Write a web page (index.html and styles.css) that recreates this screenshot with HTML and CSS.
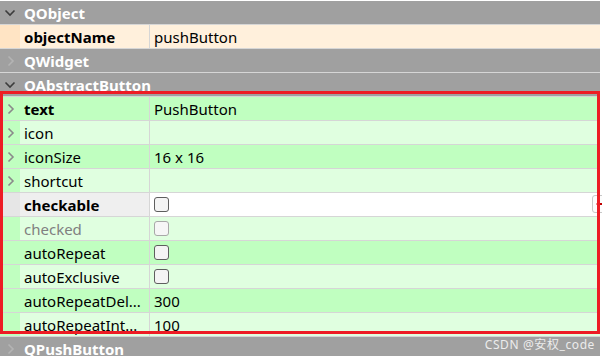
FILE: index.html
```html
<!DOCTYPE html>
<html>
<head>
<meta charset="utf-8">
<link rel="stylesheet" href="styles.css">
</head>
<body>
<div class="page">
  <div class="sheet">
    <div class="group">
      <span class="ind"><svg class="chev-down" width="12" height="8" viewBox="0 0 12 8"><polyline points="1.5,1.5 6,6 10.5,1.5"/></svg></span>
      <span class="gname">QObject</span>
    </div>
    <div class="prop obj">
      <span class="ind"></span>
      <span class="name bold">objectName</span>
      <span class="val">pushButton</span>
    </div>
    <div class="group">
      <span class="ind"><svg class="chev-right faint" width="8" height="12" viewBox="0 0 8 12"><polyline points="1.5,1.5 6,6 1.5,10.5"/></svg></span>
      <span class="gname">QWidget</span>
    </div>
    <div class="group">
      <span class="ind"><svg class="chev-down" width="12" height="8" viewBox="0 0 12 8"><polyline points="1.5,1.5 6,6 10.5,1.5"/></svg></span>
      <span class="gname">QAbstractButton</span>
    </div>

    <div class="prop dark">
      <span class="ind"><svg class="chev-right" width="8" height="12" viewBox="0 0 8 12"><polyline points="1.5,1.5 6,6 1.5,10.5"/></svg></span>
      <span class="name bold">text</span>
      <span class="val">PushButton</span>
    </div>
    <div class="prop light">
      <span class="ind"><svg class="chev-right" width="8" height="12" viewBox="0 0 8 12"><polyline points="1.5,1.5 6,6 1.5,10.5"/></svg></span>
      <span class="name">icon</span>
      <span class="val"></span>
    </div>
    <div class="prop dark">
      <span class="ind"><svg class="chev-right" width="8" height="12" viewBox="0 0 8 12"><polyline points="1.5,1.5 6,6 1.5,10.5"/></svg></span>
      <span class="name">iconSize</span>
      <span class="val">16 x 16</span>
    </div>
    <div class="prop light">
      <span class="ind"><svg class="chev-right" width="8" height="12" viewBox="0 0 8 12"><polyline points="1.5,1.5 6,6 1.5,10.5"/></svg></span>
      <span class="name">shortcut</span>
      <span class="val"></span>
    </div>
    <div class="prop current">
      <span class="ind"></span>
      <span class="name bold">checkable</span>
      <span class="val"><span class="box"></span><span class="reset"><svg width="8" height="8" viewBox="0 0 8 8"><path d="M1 4 L4 1.5 L4 3 L7 3 L7 5 L4 5 L4 6.5 Z"/></svg></span></span>
    </div>
    <div class="prop light">
      <span class="ind"></span>
      <span class="name dim">checked</span>
      <span class="val"><span class="box disabled"></span></span>
    </div>
    <div class="prop dark">
      <span class="ind"></span>
      <span class="name">autoRepeat</span>
      <span class="val"><span class="box"></span></span>
    </div>
    <div class="prop light">
      <span class="ind"></span>
      <span class="name">autoExclusive</span>
      <span class="val"><span class="box"></span></span>
    </div>
    <div class="prop dark">
      <span class="ind"></span>
      <span class="name">autoRepeatDel...</span>
      <span class="val">300</span>
    </div>
    <div class="prop light">
      <span class="ind"></span>
      <span class="name">autoRepeatInt...</span>
      <span class="val">100</span>
    </div>
    <div class="group">
      <span class="ind"><svg class="chev-right faint" width="8" height="12" viewBox="0 0 8 12"><polyline points="1.5,1.5 6,6 1.5,10.5"/></svg></span>
      <span class="gname">QPushButton</span>
    </div>
  </div>
  <div class="highlight"></div>
  <div class="watermark">CSDN @安权_code</div>
</div>
</body>
</html>
```

FILE: styles.css
```css
html, body {
  margin: 0;
  padding: 0;
  background: #ffffff;
}
.page {
  position: relative;
  width: 602px;
  height: 356px;
  overflow: hidden;
  padding-top: 1px;
  box-sizing: border-box;
  font-family: "Noto Sans", "Noto Sans CJK SC", sans-serif;
  font-size: 15px;
  color: #000000;
}
.sheet {
  width: 600px;
  display: flex;
  flex-direction: column;
}
.group, .prop {
  height: 23px;
  border-bottom: 1px solid #d6d6d6;
  display: flex;
  align-items: center;
}
.group {
  background: #a0a0a0;
}
.ind {
  width: 20px;
  height: 100%;
  flex: none;
  display: flex;
  align-items: center;
  justify-content: center;
}
.gname {
  padding-left: 4px;
  color: #ffffff;
  font-weight: bold;
  padding-top: 1px;
}
.chev-down polyline, .chev-right polyline {
  fill: none;
  stroke: #3c3c3c;
  stroke-width: 1.6;
}
.chev-right polyline {
  stroke: #8a8a8a;
}
.chev-right.faint polyline {
  stroke: #b4b4b4;
}
.chev-right {
  margin-left: 2px;
}
.name {
  flex: none;
  height: 100%;
  padding-left: 4px;
  padding-top: 1px;
  box-sizing: border-box;
  width: 130px;
  display: flex;
  align-items: center;
  border-right: 1px solid #d6d6d6;
  white-space: nowrap;
  overflow: hidden;
}
.bold { font-weight: bold; }
.dim { color: #808080; }
.val {
  flex: 1;
  height: 100%;
  padding-left: 4px;
  padding-top: 1px;
  box-sizing: border-box;
  display: flex;
  align-items: center;
  position: relative;
}
.obj { background: #fff0dc; }
.obj .ind { background: #ffe4c4; }
.dark { background: #c0ffc0; }
.light { background: #e0ffe0; }
.light .ind { background: #c0ffc0; }
.current { background: #f0f0f0; }
.current .ind { background: #e6e6e6; }
.current .name { background: #efefef; }
.current .val { background: #ffffff; }
.box {
  width: 13px;
  height: 13px;
  border: 1px solid #5e5e5e;
  border-radius: 3px;
  background: #f4f4f4;
  box-sizing: content-box;
  margin-left: 0;
  margin-top: -1px;
}
.box.disabled {
  border-color: #a8a8a8;
  background: #f6f6f6;
}
.reset {
  position: absolute;
  right: -6px;
  top: 2px;
  width: 14px;
  height: 18px;
  border: 1px solid #c8c8c8;
  border-radius: 3px;
  background: #fdfdfd;
  display: flex;
  align-items: center;
  padding-left: 2px;
  box-sizing: border-box;
}
.reset path { fill: #c00000; }
.highlight {
  position: absolute;
  left: 0;
  top: 91px;
  width: 600px;
  height: 243px;
  border: 3px solid #ed1c24;
  box-sizing: border-box;
  pointer-events: none;
}
.watermark {
  position: absolute;
  right: 7px;
  bottom: 3px;
  font-size: 12px;
  letter-spacing: 0.6px;
  color: #ececec;
  font-family: "Noto Sans", "Noto Sans CJK SC", sans-serif;
}
```
